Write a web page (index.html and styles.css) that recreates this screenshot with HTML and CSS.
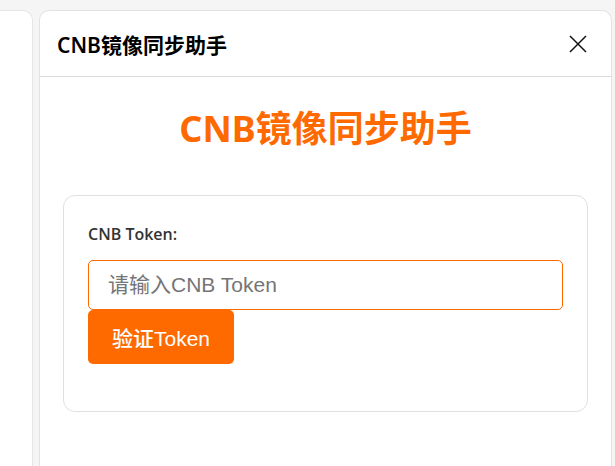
FILE: index.html
```html
<!DOCTYPE html>
<html lang="zh-CN">
<head>
    <meta charset="UTF-8">
    <meta name="viewport" content="width=device-width, initial-scale=1.0">
    <title>CNB镜像同步助手</title>
    <link rel="stylesheet" href="styles.css">
</head>
<body>
    <div class="layout">
        <div class="side-panel"></div>
        <div class="main-panel">
            <div class="panel-header">
                <div class="panel-title">CNB镜像同步助手</div>
                <button class="close-btn" aria-label="关闭">
                    <svg width="18" height="18" viewBox="0 0 18 18">
                        <path d="M1 1 L17 17 M17 1 L1 17" stroke="#111" stroke-width="1.5" fill="none"/>
                    </svg>
                </button>
            </div>
            <div class="panel-body">
                <h1 class="app-title">CNB镜像同步助手</h1>
                <div class="card">
                    <div class="form-group">
                        <label for="token">CNB Token:</label>
                        <input id="token" type="text" placeholder="请输入CNB Token" spellcheck="false">
                        <button class="verify-btn">验证Token</button>
                    </div>
                </div>
            </div>
        </div>
    </div>
</body>
</html>
```

FILE: styles.css
```css
* {
    margin: 0;
    padding: 0;
    box-sizing: border-box;
}

body {
    background: #f5f5f5;
    font-family: "Noto Sans", "Noto Sans CJK SC", sans-serif;
    height: 466px;
    overflow: hidden;
}

.layout {
    display: flex;
    gap: 6px;
    padding: 10px 3px 0 0;
    height: 100%;
}

.side-panel {
    width: 33px;
    background: white;
    border: 1px solid #e6e6e6;
    border-left: none;
    border-bottom: none;
    border-top-right-radius: 10px;
}

.main-panel {
    flex: 1;
    background: white;
    border: 1px solid #e2e2e2;
    border-bottom: none;
    border-radius: 10px 10px 0 0;
}

.panel-header {
    height: 66px;
    display: flex;
    align-items: center;
    justify-content: space-between;
    padding: 0 24px 0 17px;
    border-bottom: 1px solid #dcdcdc;
}

.panel-title {
    font-size: 21px;
    font-weight: 600;
    color: #000;
}

.close-btn {
    background: none;
    border: none;
    display: flex;
    cursor: pointer;
}

.panel-body {
    padding: 0 23px;
}

.app-title {
    text-align: center;
    color: #ff6a00;
    font-size: 36px;
    font-weight: 700;
    margin: 28px 0 42px;
    line-height: 48px;
}

.card {
    border: 1px solid #e0e0e0;
    border-radius: 12px;
    padding: 27px 24px 47px;
}

.form-group label {
    display: block;
    font-family: "Open Sans", "Noto Sans CJK SC", sans-serif;
    font-size: 16px;
    font-weight: 600;
    color: #333;
    line-height: 22px;
    margin-bottom: 15px;
}

.form-group input {
    display: block;
    width: 100%;
    height: 50px;
    padding: 0 19px;
    border: 1px solid #ff6a00;
    border-radius: 5px;
    font-family: "Liberation Sans", "Noto Sans CJK SC", sans-serif;
    font-size: 21px;
    color: #333;
    outline: none;
}

.form-group input::placeholder {
    color: #757575;
}

.verify-btn {
    display: block;
    height: 54px;
    padding: 0 24px;
    background: #ff6a00;
    color: white;
    border: none;
    border-radius: 5px;
    font-family: "Liberation Sans", "Noto Sans CJK SC", sans-serif;
    font-size: 21px;
    font-weight: 500;
    cursor: pointer;
}
```
